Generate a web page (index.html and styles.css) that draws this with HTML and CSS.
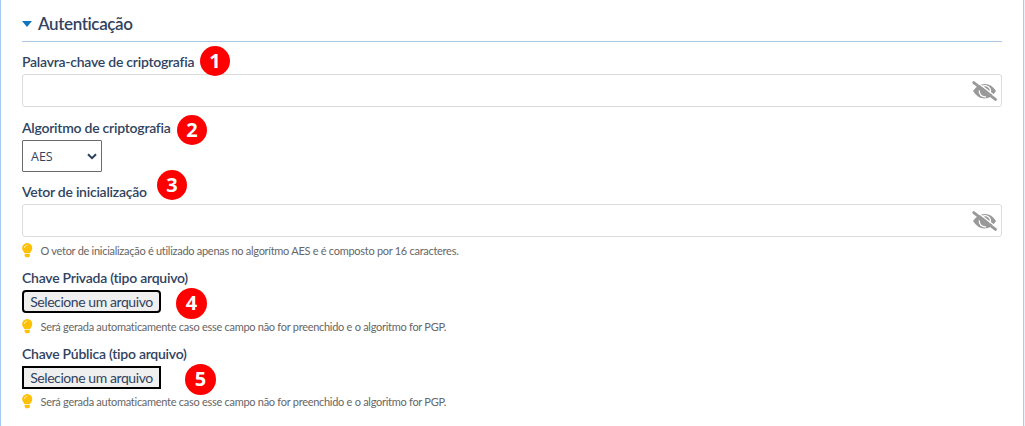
FILE: index.html
```html
<!DOCTYPE html>
<html lang="pt-BR">

<head>
  <meta charset="UTF-8" />
  <meta name="viewport" content="width=device-width, initial-scale=1.0" />
  <title>Autenticação</title>
  <link rel="stylesheet" href="styles.css">
</head>

<body>

  <svg class="sprite" aria-hidden="true">
    <symbol id="eye-off" viewBox="0 0 26 22">
      <path d="M1 11 Q6 3.6 13.5 3.6 Q20.5 3.6 25 11 Q20 18.8 13 18.8 Q6 18.8 1 11Z" fill="#999" />
      <path d="M10.5 6.6 A5.4 5.4 0 0 1 18.4 13.6" fill="none" stroke="#fff" stroke-width="1.4" />
      <path d="M7.6 10.4 A5.8 5.8 0 0 0 14.5 17" fill="none" stroke="#fff" stroke-width="1.4" />
      <path d="M2.5 -0.4 L26.5 18.2" stroke="#fff" stroke-width="1.4" />
      <path d="M1.8 2.2 L24.4 19.8" stroke="#999" stroke-width="2.9" stroke-linecap="round" />
    </symbol>
    <symbol id="bulb" viewBox="0 0 10 14">
      <path d="M5 0 A5 5 0 0 0 0 5 C0 7.4 2 8.2 2.4 10 H7.6 C8 8.2 10 7.4 10 5 A5 5 0 0 0 5 0Z" fill="#ffc107" />
      <path d="M2.5 10.5 H7.5 V12.6 L6.4 14 H3.6 L2.5 12.6Z" fill="#ffc107" />
      <path d="M2.2 4.8 A2.8 2.8 0 0 1 5 2.1" fill="none" stroke="#fff0b8" stroke-width="0.8" />
    </symbol>
  </svg>

  <div class="panel">
    <h2 class="panel-title"><span class="caret"></span>Autenticação</h2>

    <div class="field">
      <div class="label-row">
        <label for="keyword">Palavra-chave de criptografia</label>
        <span class="badge badge-1">1</span>
      </div>
      <div class="input-box">
        <input type="password" id="keyword">
        <svg class="eye"><use href="#eye-off" /></svg>
      </div>
    </div>

    <div class="field algorithm">
      <div class="label-row">
        <label for="algorithm">Algoritmo de criptografia</label>
        <span class="badge badge-2">2</span>
      </div>
      <div class="select-box" id="algorithm">
        <span>AES</span>
        <svg class="chevron" viewBox="0 0 10 7">
          <path d="M1 1.2 L5 5.1 L9 1.2" fill="none" stroke="#2b3f5c" stroke-width="2" />
        </svg>
      </div>
    </div>

    <div class="field with-hint">
      <div class="label-row">
        <label for="vector">Vetor de inicialização</label>
        <span class="badge badge-3">3</span>
      </div>
      <div class="input-box">
        <input type="password" id="vector">
        <svg class="eye"><use href="#eye-off" /></svg>
      </div>
      <div class="hint">
        <svg class="bulb"><use href="#bulb" /></svg>
        <span>O vetor de inicialização é utilizado apenas no algorítmo AES e é composto por 16 caracteres.</span>
      </div>
    </div>

    <div class="field with-hint">
      <div class="label-row">
        <label>Chave Privada (tipo arquivo)</label>
        <span class="badge badge-4">4</span>
      </div>
      <button class="file-btn rounded" type="button">Selecione um arquivo</button>
      <div class="hint">
        <svg class="bulb"><use href="#bulb" /></svg>
        <span>Será gerada automaticamente caso esse campo não for preenchido e o algoritmo for PGP.</span>
      </div>
    </div>

    <div class="field with-hint">
      <div class="label-row">
        <label>Chave Pública (tipo arquivo)</label>
        <span class="badge badge-5">5</span>
      </div>
      <button class="file-btn" type="button">Selecione um arquivo</button>
      <div class="hint hint-last">
        <svg class="bulb"><use href="#bulb" /></svg>
        <span>Será gerada automaticamente caso esse campo não for preenchido e o algoritmo for PGP.</span>
      </div>
    </div>
  </div>

</body>

</html>
```

FILE: styles.css
```css
* {
  box-sizing: border-box;
}

body {
  margin: 0;
  height: 426px;
  overflow: hidden;
  background: #e9f3fd;
  font-family: Lato, "Open Sans", sans-serif;
  color: #30435f;
}

.sprite {
  display: none;
}

.panel {
  width: 1024px;
  height: 426px;
  padding: 6px 21px 0;
  background: #fff;
  border-left: 1px solid #a6c9f3;
  border-right: 1px solid #a3cdf8;
}

.panel-title {
  display: flex;
  align-items: center;
  height: 36px;
  margin: 0 0 10px;
  border-bottom: 1px solid #a9c9e6;
  font-size: 17px;
  font-weight: 600;
  letter-spacing: -0.38px;
}

.caret {
  margin-right: 6px;
  border: 5.5px solid transparent;
  border-top: 6px solid #0f76bd;
  border-bottom: 0;
}

.field {
  margin-bottom: 11px;
}

.algorithm {
  margin-bottom: 10px;
}

.with-hint {
  margin-bottom: 7px;
}

.label-row {
  position: relative;
  height: 20px;
  margin-bottom: 2px;
  font-size: 14px;
  font-weight: 600;
  line-height: 20px;
  letter-spacing: -0.25px;
  white-space: nowrap;
}

.label-row label {
  display: block;
}

/* numbered callouts over the form */
.badge {
  position: absolute;
  width: 30px;
  height: 30px;
  border-radius: 50%;
  background: #fe0000;
  color: #fff;
  font-family: "Open Sans", sans-serif;
  font-size: 20px;
  font-weight: 700;
  line-height: 30px;
  letter-spacing: 0;
  text-align: center;
}

.badge-1 {
  left: 178px;
  top: -6px;
}

.badge-2 {
  left: 155px;
  top: -3px;
}

.badge-3 {
  left: 135px;
  top: -12px;
}

.badge-4 {
  left: 154px;
  top: 20px;
  width: 31px;
  height: 31px;
}

.badge-5 {
  left: 163px;
  top: 20px;
  width: 31px;
  height: 31px;
}

.input-box {
  display: flex;
  align-items: center;
  height: 33px;
  padding: 0 4px 0 8px;
  border: 1px solid #dcdcdc;
  border-radius: 3px;
}

.input-box input {
  flex: 1;
  border: none;
  outline: none;
  background: none;
}

.eye {
  width: 25px;
  height: 22px;
}

.select-box {
  display: flex;
  align-items: center;
  justify-content: space-between;
  width: 80px;
  height: 32px;
  padding: 0 4px 0 8px;
  border: 1px solid #6b6b6b;
  border-radius: 1px;
  font-family: "Open Sans", "Noto Sans", sans-serif;
  font-size: 12.5px;
}

.chevron {
  width: 10px;
  height: 7px;
}

.file-btn {
  display: block;
  width: 139px;
  height: 23px;
  padding: 0;
  border: 2px solid #000;
  background: #efefef;
  color: #30435f;
  font-family: inherit;
  font-size: 14px;
  line-height: 19px;
  letter-spacing: -0.42px;
  white-space: nowrap;
}

.rounded {
  border-radius: 4px;
}

.hint {
  display: flex;
  align-items: center;
  gap: 8px;
  height: 21px;
  margin-top: 3px;
  color: #666;
  font-size: 11px;
  letter-spacing: -0.28px;
  white-space: nowrap;
}

.hint-last {
  margin-top: 2px;
}

.bulb {
  width: 10.5px;
  height: 14.5px;
}
```
